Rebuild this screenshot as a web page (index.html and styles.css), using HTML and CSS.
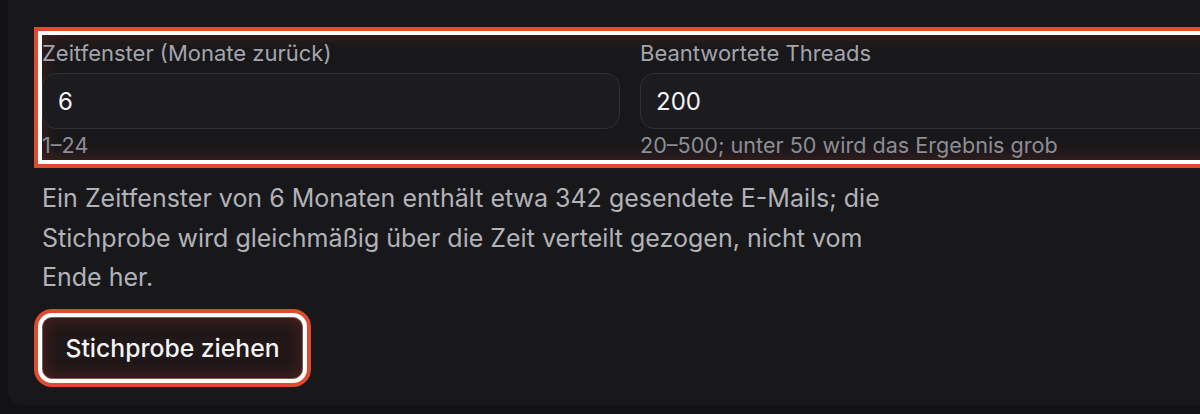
FILE: index.html
```html
<!DOCTYPE html>
<html lang="de">
<head>
<meta charset="utf-8">
<title>Stichprobe</title>
<link rel="stylesheet" href="styles.css">
</head>
<body>
<div class="card">
  <div class="fields hl">
    <div class="field">
      <label class="label">Zeitfenster (Monate zurück)</label>
      <div class="input">6</div>
      <div class="help">1–24</div>
    </div>
    <div class="field">
      <label class="label">Beantwortete Threads</label>
      <div class="input">200</div>
      <div class="help">20–500; unter 50 wird das Ergebnis grob</div>
    </div>
  </div>
  <p class="note">Ein Zeitfenster von 6 Monaten enthält etwa 342 gesendete E-Mails; die Stichprobe wird gleichmäßig über die Zeit verteilt gezogen, nicht vom Ende her.</p>
  <button class="btn hl">Stichprobe ziehen</button>
</div>
</body>
</html>
```

FILE: styles.css
```css
html, body {
  margin: 0;
  padding: 0;
  background: #121214;
  overflow: hidden;
  font-family: Inter, "Noto Sans", sans-serif;
}
.card {
  margin-left: 8px;
  width: 1244px;
  box-sizing: border-box;
  background: #18181b;
  border-bottom-left-radius: 14px;
  padding: 35px 34px 26px 34px;
}
.hl {
  box-shadow: 0 0 0 4px #ffffff, 0 0 0 8px #e04a2f, inset 0 0 18px rgba(200, 60, 40, 0.3);
}
.fields {
  display: grid;
  grid-template-columns: 1fr 1fr;
  column-gap: 20px;
  padding-top: 2px;
}
.field {
  display: flex;
  flex-direction: column;
}
.label {
  font-size: 22px;
  line-height: 32px;
  color: #a4a4ab;
  margin-bottom: 4px;
}
.input {
  height: 56px;
  box-sizing: border-box;
  border: 1px solid #2e2e33;
  border-radius: 14px;
  background: #1c1c20;
  color: #f4f4f5;
  font-size: 24px;
  display: flex;
  align-items: center;
  padding-left: 15px;
}
.help {
  font-size: 21.6px;
  line-height: 30px;
  color: #8d8d94;
  margin-top: 1px;
}
.note {
  margin: 19px 0 0 0;
  max-width: 852px;
  font-size: 25px;
  line-height: 39.5px;
  color: #b2b2b9;
}
.btn {
  margin-top: 19px;
  display: block;
  width: 261px;
  height: 62px;
  box-sizing: border-box;
  border: 1px solid #7a5a56;
  border-radius: 10px;
  background: #1f1718;
  color: #f4f4f5;
  font-family: Inter, "Noto Sans", sans-serif;
  font-size: 24.7px;
  font-weight: 500;
  padding: 0 20px;
}
```
